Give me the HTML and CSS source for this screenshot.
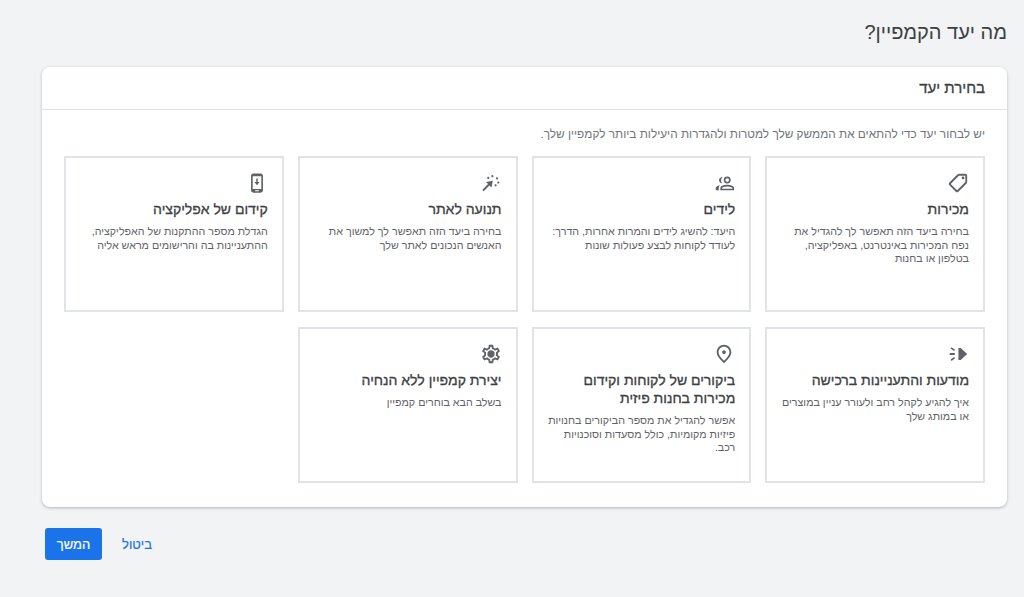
FILE: index.html
```html
<!DOCTYPE html>
<html lang="he" dir="rtl">
<head>
  <meta charset="UTF-8" />
  <title>מה יעד הקמפיין?</title>
  <link rel="stylesheet" href="styles.css">
</head>
<body>
  <h1 class="page-title">מה יעד הקמפיין?</h1>

  <div class="panel">
    <div class="panel-head">בחירת יעד</div>
    <div class="panel-body">
      <p class="hint">יש לבחור יעד כדי להתאים את הממשק שלך למטרות ולהגדרות היעילות ביותר לקמפיין שלך.</p>

      <div class="goal-grid">
        <div class="goal">
          <svg class="icon flip" viewBox="0 0 24 24"><path d="M21.41 11.58l-9-9C12.05 2.22 11.55 2 11 2H4c-1.1 0-2 .9-2 2v7c0 .55.22 1.05.59 1.42l9 9c.36.36.86.58 1.41.58s1.05-.22 1.41-.59l7-7c.37-.36.59-.86.59-1.41s-.23-1.06-.59-1.42zM13 20.01L4 11V4h7v-.01l9 8.99-7 7.02z"/><circle cx="6.5" cy="6.5" r="1.5"/></svg>
          <h3>מכירות</h3>
          <p>בחירה ביעד הזה תאפשר לך להגדיל את נפח המכירות באינטרנט, באפליקציה, בטלפון או בחנות</p>
        </div>

        <div class="goal">
          <svg class="icon" viewBox="0 0 24 24"><path d="M15.500 5a3.800 3.800 0 1 1 0 7.600 3.800 3.800 0 0 1 0-7.600zm0 1.800a2 2 0 1 0 0 4 2 2 0 0 0 0-4zM15.500 14c3 0 7.500 1.300 7.500 3.500V20H8v-2.500c0-2.200 4.500-3.500 7.500-3.500zm0 1.800c-2.800 0-5.500 1-5.700 1.900v.5h11.400v-.5c-.2-.9-2.900-1.900-5.700-1.900z"/><path d="M10.500 5.400a5 5 0 0 0-.3 6.800A3.600 3.600 0 0 1 6.500 8.800c0-1.800 1.800-3.200 4-3.400zM7.500 14.500c-.8.8-1.200 1.800-1.200 3V20H3v-2.500c0-1.500 2.500-2.600 4.500-3z"/></svg>
          <h3>לידים</h3>
          <p>היעד: להשיג לידים והמרות אחרות, הדרך: לעודד לקוחות לבצע פעולות שונות</p>
        </div>

        <div class="goal">
          <svg class="icon" viewBox="0 0 24 24"><path d="M4 21l-1.500-1.500 6.300-6.300L6.500 11l7.500-1.500L12.500 17l-2.200-2.300z"/><circle cx="9" cy="6.500" r="1.200"/><circle cx="13.500" cy="4.500" r="1.200"/><circle cx="18.500" cy="7" r="1.200"/><circle cx="20" cy="11.500" r="1.200"/><circle cx="17" cy="14.500" r="1.200"/></svg>
          <h3>תנועה לאתר</h3>
          <p>בחירה ביעד הזה תאפשר לך למשוך את האנשים הנכונים לאתר שלך</p>
        </div>

        <div class="goal">
          <svg class="icon" viewBox="0 0 24 24"><path d="M16 1.500H8c-1.400 0-2.500 1.100-2.500 2.500v16c0 1.400 1.100 2.500 2.500 2.500h8c1.400 0 2.500-1.100 2.500-2.500V4c0-1.400-1.100-2.500-2.500-2.500zM14 21h-4v-1h4v1zm2.700-2.500H7.300v-14h9.400v14z"/><path d="M11.200 7h1.600v4h2l-2.800 3.400L9.200 11h2z"/></svg>
          <h3>קידום של אפליקציה</h3>
          <p>הגדלת מספר ההתקנות של האפליקציה, ההתעניינות בה והרישומים מראש אליה</p>
        </div>

        <div class="goal">
          <svg class="icon" viewBox="0 0 24 24"><path d="M12.500 5.500h2.500l7 6.500-7 6.500h-2.500z"/><path d="M3 11h5.500v2H3zM5 4.500l3.800 2.900-1.100 1.400-3.800-2.900zM7.700 15.200l1.100 1.400L5 19.500l-1.100-1.400z"/></svg>
          <h3>מודעות והתעניינות ברכישה</h3>
          <p>איך להגיע לקהל רחב ולעורר עניין במוצרים או במותג שלך</p>
        </div>

        <div class="goal">
          <svg class="icon" viewBox="0 0 24 24"><path d="M12 12c-1.100 0-2-.9-2-2s.9-2 2-2 2 .9 2 2-.9 2-2 2zm6-1.800C18 6.570 15.350 4 12 4s-6 2.570-6 6.200c0 2.340 1.950 5.440 6 9.140 4.050-3.700 6-6.800 6-9.140zM12 2c4.200 0 8 3.220 8 8.200 0 3.320-2.670 7.250-8 11.800-5.330-4.550-8-8.480-8-11.800C4 5.220 7.800 2 12 2z"/></svg>
          <h3>ביקורים של לקוחות וקידום מכירות בחנות פיזית</h3>
          <p>אפשר להגדיל את מספר הביקורים בחנויות פיזיות מקומיות, כולל מסעדות וסוכנויות רכב.</p>
        </div>

        <div class="goal">
          <svg class="icon" viewBox="0 0 24 24"><path d="M19.430 12.980c.04-.32.07-.64.07-.98 0-.34-.03-.66-.07-.98l2.110-1.650c.19-.15.24-.42.12-.64l-2-3.460c-.09-.16-.26-.25-.44-.25-.06 0-.12.01-.17.03l-2.490 1c-.52-.4-1.080-.73-1.690-.98l-.38-2.650C14.460 2.180 14.250 2 14 2h-4c-.25 0-.46.18-.49.42l-.38 2.650c-.61.25-1.170.59-1.690.98l-2.490-1c-.06-.02-.12-.03-.18-.03-.17 0-.34.09-.43.25l-2 3.460c-.13.22-.07.49.12.64l2.110 1.650c-.04.32-.07.65-.07.98 0 .33.03.66.07.98l-2.110 1.650c-.19.15-.24.42-.12.64l2 3.460c.09.16.26.25.44.25.06 0 .12-.01.17-.03l2.490-1c.52.4 1.080.73 1.690.98l.38 2.650c.03.24.24.42.49.42h4c.25 0 .46-.18.49-.42l.38-2.650c.61-.25 1.170-.59 1.690-.98l2.490 1c.06.02.12.03.18.03.17 0 .34-.09.43-.25l2-3.460c.12-.22.07-.49-.12-.64l-2.110-1.650zm-1.980-1.710c.04.31.05.52.05.73 0 .21-.02.43-.05.73l-.14 1.130.89.7 1.080.84-.7 1.210-1.270-.51-1.040-.42-.9.68c-.43.32-.84.56-1.250.73l-1.060.43-.16 1.130-.2 1.350h-1.400l-.19-1.350-.16-1.130-1.060-.43c-.43-.18-.83-.41-1.230-.71l-.91-.7-1.060.43-1.270.51-.7-1.210 1.080-.84.89-.7-.14-1.130c-.03-.31-.05-.54-.05-.74s.02-.43.05-.73l.14-1.130-.89-.7-1.080-.84.7-1.210 1.270.51 1.040.42.9-.68c.43-.32.84-.56 1.250-.73l1.060-.43.16-1.130.2-1.350h1.390l.19 1.350.16 1.130 1.060.43c.43.18.83.41 1.230.71l.91.7 1.060-.43 1.270-.51.7 1.210-1.070.85-.89.7.14 1.130zM12 8c-2.210 0-4 1.790-4 4s1.790 4 4 4 4-1.790 4-4-1.790-4-4-4z"/></svg>
          <h3>יצירת קמפיין ללא הנחיה</h3>
          <p>בשלב הבא בוחרים קמפיין</p>
        </div>
      </div>
    </div>
  </div>

  <div class="actions">
    <a class="cancel">ביטול</a>
    <button class="next">המשך</button>
  </div>
</body>
</html>
```

FILE: styles.css
```css
* { box-sizing: border-box; font-family: "Liberation Sans", Arial, sans-serif; }

body {
  margin: 0;
  padding: 0 17px 0 0;
  height: 597px;
  overflow: hidden;
  background: #f1f3f4;
  color: #3c4043;
}

.page-title {
  margin: 0;
  height: 67px;
  padding-top: 20px;
  font-size: 20px;
  line-height: 25px;
  font-weight: 400;
}

.panel {
  width: 965px;
  height: 440px;
  background: #ffffff;
  border-radius: 8px;
  box-shadow: 0 1px 3px rgba(60,64,67,0.35);
}

.panel-head {
  height: 43px;
  padding-right: 22px;
  border-bottom: 1px solid #e0e2e4;
  font-size: 15px;
  -webkit-text-stroke: 0.3px #3c4043;
  line-height: 41px;
}

.panel-body { padding: 0 22px; }

.hint {
  margin: 0;
  padding-top: 16px;
  height: 46px;
  font-size: 11.800px;
  line-height: 16px;
  color: #70757a;
}

.goal-grid {
  display: grid;
  grid-template-columns: repeat(4, 1fr);
  grid-template-rows: 156px 156px;
  gap: 15px 14px;
}

.goal {
  border: 2px solid #e0e3e7;
  padding: 13px 14px 0 14px;
}

.icon {
  display: block;
  width: 22px;
  height: 22px;
  margin: 1px 0;
  fill: #5f6368;
}

.icon.flip { transform: scaleX(-1); }

.goal h3 {
  margin: 6px 0 7px;
  font-size: 14px;
  line-height: 18px;
  font-weight: 400;
  -webkit-text-stroke: 0.3px #3c4043;
  color: #3c4043;
}

.goal p {
  margin: 0;
  font-size: 10.700px;
  line-height: 13.500px;
  color: #5f6368;
}

.actions {
  display: flex;
  align-items: center;
  justify-content: flex-end;
  gap: 20px;
  width: 1007px;
  margin-top: 21px;
  padding-left: 45px;
}

.cancel {
  font-size: 13px;
  -webkit-text-stroke: 0.2px #1a73e8;
  color: #1a73e8;
  cursor: pointer;
}

.next {
  width: 57px;
  height: 32px;
  border: none;
  border-radius: 3px;
  background: #1a73e8;
  color: #ffffff;
  font-size: 13px;
  -webkit-text-stroke: 0.2px #ffffff;
  cursor: pointer;
}
```
